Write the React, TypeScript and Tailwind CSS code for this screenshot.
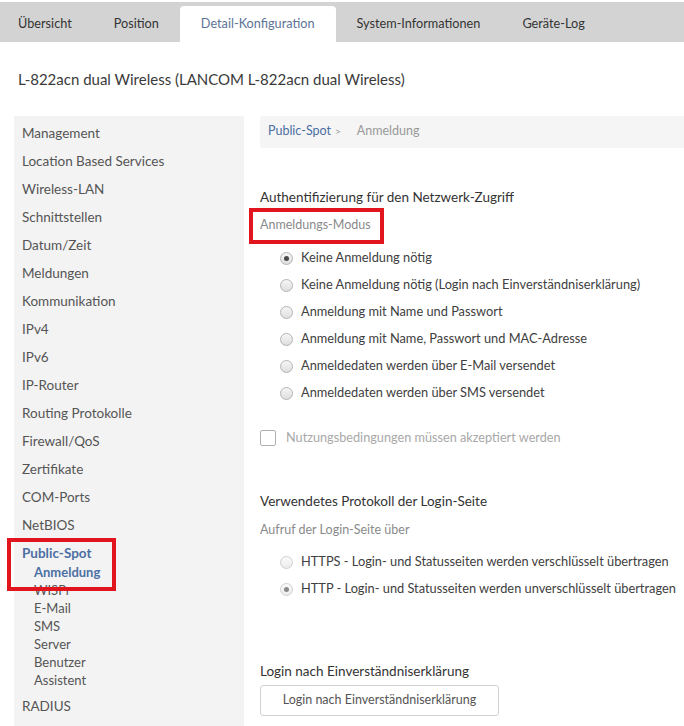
const tabs = ['Übersicht', 'Position', 'Detail-Konfiguration', 'System-Informationen', 'Geräte-Log'];

const menu = [
  'Management',
  'Location Based Services',
  'Wireless-LAN',
  'Schnittstellen',
  'Datum/Zeit',
  'Meldungen',
  'Kommunikation',
  'IPv4',
  'IPv6',
  'IP-Router',
  'Routing Protokolle',
  'Firewall/QoS',
  'Zertifikate',
  'COM-Ports',
  'NetBIOS',
];

const subMenu = ['WISPr', 'E-Mail', 'SMS', 'Server', 'Benutzer', 'Assistent'];

const modes = [
  'Keine Anmeldung nötig',
  'Keine Anmeldung nötig (Login nach Einverständniserklärung)',
  'Anmeldung mit Name und Passwort',
  'Anmeldung mit Name, Passwort und MAC-Adresse',
  'Anmeldedaten werden über E-Mail versendet',
  'Anmeldedaten werden über SMS versendet',
];

function Radio({ checked, disabled }: { checked?: boolean; disabled?: boolean }) {
  return (
    <span
      className={
        disabled
          ? 'flex h-[13px] w-[13px] items-center justify-center rounded-full border border-[#d0d0d0] bg-gradient-to-b from-[#fafafa] to-[#ececec]'
          : 'flex h-[13px] w-[13px] items-center justify-center rounded-full border border-[#b4b4b4] bg-gradient-to-b from-[#f6f6f6] to-[#dedede]'
      }
    >
      {checked && (
        <span className={disabled ? 'h-[5px] w-[5px] rounded-full bg-[#8a8a8a]' : 'h-[5px] w-[5px] rounded-full bg-[#4a4a4a]'} />
      )}
    </span>
  );
}

function RadioRow({ label, checked, disabled }: { label: string; checked?: boolean; disabled?: boolean }) {
  return (
    <div className="flex h-[27px] items-center pl-[20px]">
      <Radio checked={checked} disabled={disabled} />
      <span className="ml-[8px] text-[12.8px] text-[#404040]">{label}</span>
    </div>
  );
}

export default function App() {
  return (
    <div className="min-h-[726px] bg-white font-['Lato',sans-serif] text-[#444]">
      <div className="mt-[2px] h-[40px] bg-[#d3d3d3]">
        <div className="-ml-[3px] flex h-full items-end">
          {tabs.map((t) => (
            <div
              key={t}
              className={
                t === 'Detail-Konfiguration'
                  ? 'flex h-[36px] items-center rounded-t-[4px] bg-white px-[21px] text-[12.7px] text-[#5b7396]'
                  : 'flex h-[36px] items-center px-[21px] text-[12.7px] text-[#333]'
              }
            >
              {t}
            </div>
          ))}
        </div>
      </div>

      <div className="pl-[18px] pt-[26px] text-[15px] text-[#3a3a3a]">
        L-822acn dual Wireless (LANCOM L-822acn dual Wireless)
      </div>

      <div className="mt-[25px] flex">
        <div className="ml-[14px] w-[230px] shrink-0 bg-[#f3f3f3] pb-[8px] pt-[4px]">
          {menu.map((m) => (
            <div key={m} className="flex h-[28px] items-center px-[8px] text-[13.5px] text-[#555]">
              {m}
            </div>
          ))}
          <div className="relative">
            <div className="flex h-[24px] items-center px-[8px] pt-[3px] text-[13.5px] font-bold text-[#4c6fa3]">
              Public-Spot
            </div>
            <div className="flex h-[18px] items-center pl-[20px] text-[13px] font-bold text-[#4c6fa3]">Anmeldung</div>
            {subMenu.map((s) => (
              <div key={s} className="flex h-[18px] items-center pl-[20px] text-[13px] text-[#555]">
                {s}
              </div>
            ))}
            <div className="absolute left-[-7px] top-[-2px] h-[53px] w-[109px] border-[4px] border-[#e2151f]" />
          </div>
          <div className="mt-[3px] flex h-[28px] items-center px-[8px] text-[13.5px] text-[#555]">RADIUS</div>
        </div>

        <div className="ml-[16px] flex-1">
          <div className="flex h-[32px] items-center rounded-l-[3px] bg-[#f5f5f5] pl-[8px] text-[12.5px]">
            <span className="text-[#4c6fa3]">Public-Spot</span>
            <span className="ml-[4px] text-[10px] text-[#999]">&gt;</span>
            <span className="ml-[16px] text-[#999]">Anmeldung</span>
          </div>

          <div className="mt-[40px] flex h-[20px] items-center text-[13.5px] text-[#333]">
            Authentifizierung für den Netzwerk-Zugriff
          </div>
          <div className="relative mt-[8px] flex h-[20px] items-center text-[12.5px] text-[#8a8a8a]">
            Anmeldungs-Modus
            <div className="absolute left-[-11px] top-[-8px] h-[36px] w-[135px] border-[4px] border-[#e2151f]" />
          </div>

          <div className="mt-[9px]">
            {modes.map((m, i) => (
              <RadioRow key={m} label={m} checked={i === 0} />
            ))}
          </div>

          <div className="mt-[18px] flex h-[27px] items-center">
            <span className="h-[16px] w-[16px] rounded-[2px] border border-[#b0b0b0] bg-white" />
            <span className="ml-[10px] text-[12.7px] text-[#a8a8a8]">Nutzungsbedingungen müssen akzeptiert werden</span>
          </div>

          <div className="mt-[40px] flex h-[20px] items-center text-[13.5px] text-[#333]">
            Verwendetes Protokoll der Login-Seite
          </div>
          <div className="mt-[9px] flex h-[20px] items-center text-[12.5px] text-[#8a8a8a]">
            Aufruf der Login-Seite über
          </div>
          <div className="mt-[8px]">
            <RadioRow label="HTTPS - Login- und Statusseiten werden verschlüsselt übertragen" disabled />
            <RadioRow label="HTTP - Login- und Statusseiten werden unverschlüsselt übertragen" checked disabled />
          </div>

          <div className="mt-[59px] flex h-[20px] items-center text-[13.5px] text-[#333]">
            Login nach Einverständniserklärung
          </div>
          <button className="mt-[3px] flex h-[31px] w-[239px] items-center justify-center rounded-[3px] border border-[#d2d2d2] bg-white text-[12.5px] text-[#555]">
            Login nach Einverständniserklärung
          </button>
        </div>
      </div>
    </div>
  );
}
